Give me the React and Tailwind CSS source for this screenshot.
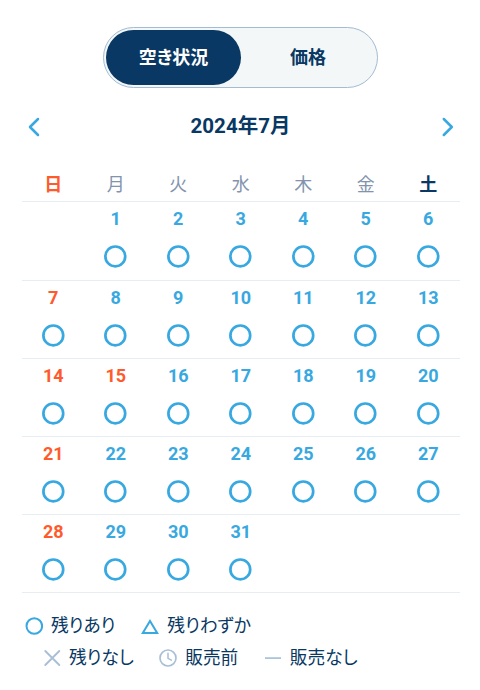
import React from 'react';

const weekdays = [
    { label: '日', className: 'font-bold text-[#ff5a2c]' },
    { label: '月', className: 'text-[#8294ad]' },
    { label: '火', className: 'text-[#8294ad]' },
    { label: '水', className: 'text-[#8294ad]' },
    { label: '木', className: 'text-[#8294ad]' },
    { label: '金', className: 'text-[#8294ad]' },
    { label: '土', className: 'font-bold text-[#083863]' },
];

const weeks = [
    [null, 1, 2, 3, 4, 5, 6],
    [7, 8, 9, 10, 11, 12, 13],
    [14, 15, 16, 17, 18, 19, 20],
    [21, 22, 23, 24, 25, 26, 27],
    [28, 29, 30, 31, null, null, null],
];

// Sundays and public holidays
const holidays = [7, 14, 15, 21, 28];

function AvailableMark() {
    return (
        <svg className="mt-4 h-[23px] w-[23px]" viewBox="0 0 23 23" fill="none">
            <circle cx="11.3" cy="11.4" r="9.9" stroke="#38a8e0" strokeWidth="2.7" />
        </svg>
    );
}

function CircleIcon() {
    return (
        <svg className="h-[18px] w-[18px]" viewBox="0 0 18 18" fill="none">
            <circle cx="9.3" cy="9" r="7.8" stroke="#38a8e0" strokeWidth="2" />
        </svg>
    );
}

function TriangleIcon() {
    return (
        <svg className="h-[18px] w-[18px]" viewBox="0 0 18 18" fill="none">
            <path d="M9 4 L16.2 16 H1.8 Z" stroke="#38a8e0" strokeWidth="2" />
        </svg>
    );
}

function CrossIcon() {
    return (
        <svg className="h-[18px] w-[18px]" viewBox="0 0 18 18" fill="none">
            <path d="M2.3 2 L16.3 16 M16.3 2 L2.3 16" stroke="#a9bfd5" strokeWidth="1.9" strokeLinecap="round" />
        </svg>
    );
}

function ClockIcon() {
    return (
        <svg className="h-[18px] w-[18px]" viewBox="0 0 18 18" fill="none">
            <circle cx="9" cy="9" r="8" stroke="#a9bfd5" strokeWidth="1.7" />
            <path d="M9 4.3 V9.3 L12.4 11.2" stroke="#a9bfd5" strokeWidth="1.5" strokeLinecap="round" />
        </svg>
    );
}

function DashIcon() {
    return (
        <svg className="h-[18px] w-[18px]" viewBox="0 0 18 18" fill="none">
            <path d="M1 9.1 H17" stroke="#a4c2da" strokeWidth="1.7" />
        </svg>
    );
}

function Chevron({ d, label }) {
    return (
        <button type="button" aria-label={label} className="h-[22px] w-[16px]">
            <svg className="h-[22px] w-[16px]" viewBox="0 0 16 22" fill="none">
                <path d={d} stroke="#38a8e0" strokeWidth="2.5" strokeLinecap="round" strokeLinejoin="round" />
            </svg>
        </button>
    );
}

function LegendItem({ icon, label }) {
    return (
        <li className="flex items-center gap-2">
            {icon}
            <span className="whitespace-nowrap">{label}</span>
        </li>
    );
}

function App() {
    return (
        <main className="h-[690px] w-[480px] overflow-hidden bg-white pt-[27px] font-[Roboto,'Noto_Sans_CJK_JP',sans-serif] text-[#083863] [font-feature-settings:'palt']">
            <div className="ml-[103px] flex h-[61px] w-[275px] rounded-full border border-[#a3bbd3] bg-[#f3f7f8] p-0.5 text-lg font-bold">
                <button type="button" className="w-[135px] rounded-full bg-[#083863] pt-px text-white">
                    空き状況
                </button>
                <button type="button" className="flex-1 pt-px">
                    価格
                </button>
            </div>

            <header className="mt-[26px] flex h-[26px] items-center justify-between pl-[26px] pr-[25px]">
                <Chevron d="M12 3 L4 11 L12 19" label="前の月" />
                <h2 className="pb-px text-[20.5px] font-bold">2024年7月</h2>
                <Chevron d="M4.8 3 L12.8 11 L4.8 19" label="次の月" />
            </header>

            <section className="ml-[22px] mt-[34px] w-[437.5px]">
                <div className="grid h-[28.4px] grid-cols-7 border-b border-[#e6eef4] text-center text-lg leading-[21px]">
                    {weekdays.map((day) => (
                        <span key={day.label} className={day.className}>
                            {day.label}
                        </span>
                    ))}
                </div>
                {weeks.map((week, i) => (
                    <div key={i} className="grid h-[78.2px] grid-cols-7 border-b border-[#e6eef4]">
                        {week.map((day, j) => (
                            <div key={j} className="flex flex-col items-center pt-[7px]">
                                {day && (
                                    <>
                                        <span
                                            className={
                                                holidays.includes(day)
                                                    ? 'text-lg leading-5 font-bold text-[#ff5a2c]'
                                                    : 'text-lg leading-5 font-bold text-[#38a8e0]'
                                            }
                                        >
                                            {day}
                                        </span>
                                        <AvailableMark />
                                    </>
                                )}
                            </div>
                        ))}
                    </div>
                ))}
            </section>

            <footer className="mt-[18.6px] text-[17.7px] leading-7">
                <ul className="ml-[25px] flex gap-[26px]">
                    <LegendItem icon={<CircleIcon />} label="残りあり" />
                    <LegendItem icon={<TriangleIcon />} label="残りわずか" />
                </ul>
                <ul className="ml-[43px] mt-1 flex gap-[25.5px]">
                    <LegendItem icon={<CrossIcon />} label="残りなし" />
                    <LegendItem icon={<ClockIcon />} label="販売前" />
                    <LegendItem icon={<DashIcon />} label="販売なし" />
                </ul>
            </footer>
        </main>
    );
}

export default App;
